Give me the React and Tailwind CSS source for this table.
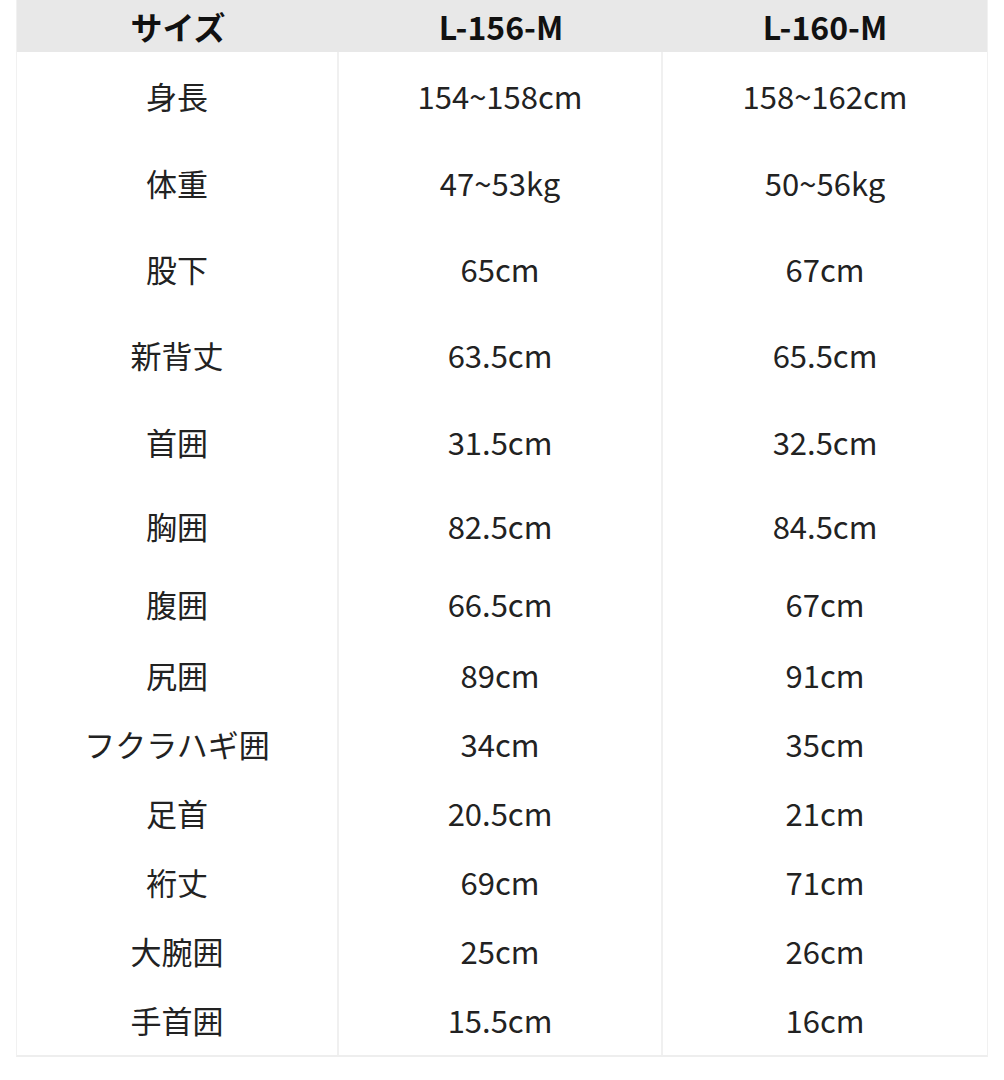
import React from 'react';

// サイズ表のデータ
const rows = [
  { label: '身長', a: '154~158cm', b: '158~162cm', h: 'h-[88px]' },
  { label: '体重', a: '47~53kg', b: '50~56kg', h: 'h-[86px]' },
  { label: '股下', a: '65cm', b: '67cm', h: 'h-[86px]' },
  { label: '新背丈', a: '63.5cm', b: '65.5cm', h: 'h-[87px]' },
  { label: '首囲', a: '31.5cm', b: '32.5cm', h: 'h-[86px]' },
  { label: '胸囲', a: '82.5cm', b: '84.5cm', h: 'h-[82px]' },
  { label: '腹囲', a: '66.5cm', b: '67cm', h: 'h-[74px]' },
  { label: '尻囲', a: '89cm', b: '91cm', h: 'h-[69px]' },
  { label: 'フクラハギ囲', a: '34cm', b: '35cm', h: 'h-[69px]' },
  { label: '足首', a: '20.5cm', b: '21cm', h: 'h-[69px]' },
  { label: '裄丈', a: '69cm', b: '71cm', h: 'h-[69px]' },
  { label: '大腕囲', a: '25cm', b: '26cm', h: 'h-[69px]' },
  { label: '手首囲', a: '15.5cm', b: '16cm', h: 'h-[69px]' },
];

const font = { fontFamily: '"Noto Sans CJK JP", "Noto Sans", sans-serif' };

const App = () => {
  return (
    <div className="w-[1004px] h-[1080px] bg-white" style={font}>
      <div className="ml-4 w-[972px] border-b-2 border-[#eeeeee] border-x border-x-[#f1f1f1]">
        {/* ヘッダー */}
        <div className="grid grid-cols-[322px_324px_1fr] h-[52px] bg-[#e8e8e8] items-center text-center text-[32px] font-bold text-[#111]">
          <div>サイズ</div>
          <div>L-156-M</div>
          <div>L-160-M</div>
        </div>
        {rows.map((r) => (
          <div key={r.label} className={`grid grid-cols-[322px_324px_1fr] ${r.h} text-center text-[31px] text-[#222]`}>
            <div className="flex items-center justify-center border-r-2 border-[#f0f0f0]">{r.label}</div>
            <div className="flex items-center justify-center border-r-2 border-[#f0f0f0]">{r.a}</div>
            <div className="flex items-center justify-center">{r.b}</div>
          </div>
        ))}
      </div>
    </div>
  );
};

export default App;
